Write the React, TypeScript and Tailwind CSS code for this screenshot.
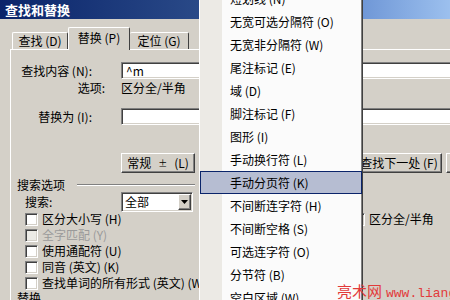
const sunken =
  "bg-white border border-t-[#808080] border-l-[#808080] border-r-white border-b-white shadow-[inset_1px_1px_0_#404040,inset_-1px_-1px_0_#d4d0c8]";
const raised =
  "bg-[#d4d0c8] border border-t-white border-l-white border-r-[#404040] border-b-[#404040] shadow-[inset_-1px_-1px_0_#808080]";

const menuItems = [
  "短划线 (N)",
  "无宽可选分隔符 (O)",
  "无宽非分隔符 (W)",
  "尾注标记 (E)",
  "域 (D)",
  "脚注标记 (F)",
  "图形 (I)",
  "手动换行符 (L)",
  "手动分页符 (K)",
  "不间断连字符 (H)",
  "不间断空格 (S)",
  "可选连字符 (O)",
  "分节符 (B)",
  "空白区域 (W)",
];

function Check({ checked, disabled }: { checked?: boolean; disabled?: boolean }) {
  return (
    <div
      className={`w-[13px] h-[13px] shrink-0 flex items-center justify-center border border-t-[#808080] border-l-[#808080] border-r-white border-b-white shadow-[inset_1px_1px_0_#404040,inset_-1px_-1px_0_#d4d0c8] ${
        disabled ? "bg-[#ecebe6]" : "bg-white"
      }`}
    >
      {checked && (
        <svg width="9" height="9" viewBox="0 0 9 9">
          <path d="M1 4 L3 6.5 L8 1.5" stroke="#000" strokeWidth="1.8" fill="none" />
        </svg>
      )}
    </div>
  );
}

function CheckRow({ label, disabled }: { label: string; disabled?: boolean }) {
  return (
    <div className="h-[16px] flex items-center pl-[14px] gap-[4px] shrink-0">
      <Check disabled={disabled} />
      <span className={disabled ? "text-[#9a9a9a]" : ""}>{label}</span>
    </div>
  );
}

export default function App() {
  return (
    <div className="relative w-[450px] h-[300px] overflow-hidden whitespace-nowrap bg-[#d4d0c8] text-[12px] leading-none text-black font-['Noto_Sans_CJK_SC',sans-serif]">
      {/* title bar */}
      <div className="h-[19px] flex items-center pl-[5px] bg-[linear-gradient(90deg,#0a246a_0%,#2a4a88_45%,#6e96d6_80%,#9cc0ee_100%)]">
        <span className="text-white font-bold text-[13px]">查找和替换</span>
      </div>

      {/* tabs */}
      <div className="flex items-end pl-[12px] mt-[8px] h-[22px]">
        <div className="w-[56px] h-[17px] flex items-center justify-center border-t border-l border-white border-r border-r-[#404040] rounded-t-[2px]">
          查找 (D)
        </div>
        <div className="relative z-10 w-[62px] h-[23px] -mb-px bg-[#d4d0c8] flex items-center justify-center border-t border-l border-white border-r border-r-[#404040] rounded-t-[2px] pb-[3px]">
          替换 (P)
        </div>
        <div className="w-[59px] h-[17px] flex items-center justify-center border-t border-white border-r border-r-[#404040] rounded-t-[2px]">
          定位 (G)
        </div>
      </div>

      {/* tab panel */}
      <div className="ml-[10px] border-t border-l border-white h-[260px] flex flex-col">
        <div className="mt-[12px] h-[17px] flex items-center shrink-0">
          <span className="w-[81px] shrink-0 text-right">查找内容 (N):</span>
          <div className={`ml-[29px] w-[400px] shrink-0 h-[17px] flex items-center pl-[4px] ${sunken}`}>^m</div>
        </div>
        <div className="h-[18px] flex items-center shrink-0">
          <span className="w-[94px] shrink-0 text-right">选项:</span>
          <span className="ml-[16px]">区分全/半角</span>
        </div>
        <div className="mt-[11px] h-[17px] flex items-center shrink-0">
          <span className="w-[81px] shrink-0 text-right">替换为 (I):</span>
          <div className={`ml-[29px] w-[400px] shrink-0 h-[17px] ${sunken}`} />
        </div>

        <div className="mt-[28px] h-[20px] flex shrink-0">
          <div className={`ml-[110px] w-[74px] shrink-0 h-[20px] flex items-center justify-center ${raised}`}>
            常规<span className="text-[9px] mx-[7px]">±</span>(L)
          </div>
          <div className={`ml-[161px] w-[86px] shrink-0 h-[20px] flex items-center justify-center ${raised}`}>
            查找下一处 (F)
          </div>
          <div className={`ml-[4px] w-[75px] shrink-0 h-[20px] ${raised}`} />
        </div>

        <div className="mt-[5px] h-[14px] flex items-center shrink-0">
          <span className="ml-[6px]">搜索选项</span>
          <div className="ml-[12px] w-[118px] h-[2px] border-t border-t-[#808080] border-b border-b-white" />
        </div>

        <div className="h-[19px] flex items-start shrink-0">
          <span className="ml-[14px] mt-[4px] w-[40px] shrink-0">搜索:</span>
          <div className={`ml-[56px] w-[72px] shrink-0 h-[20px] flex items-center justify-between pl-[3px] pr-[1px] ${sunken}`}>
            <span>全部</span>
            <div className={`w-[13px] h-[16px] flex items-center justify-center ${raised}`}>
              <svg width="7" height="4" viewBox="0 0 7 4">
                <path d="M0 0 H7 L3.5 4 Z" fill="#000" />
              </svg>
            </div>
          </div>
        </div>

        <div className="h-[16px] flex items-center shrink-0">
          <div className="w-[341px] shrink-0 flex items-center pl-[14px] gap-[4px]">
            <Check />
            <span>区分大小写 (H)</span>
          </div>
          <div className="flex items-center gap-[4px]">
            <Check checked />
            <span>区分全/半角</span>
          </div>
        </div>
        <CheckRow label="全字匹配 (Y)" disabled />
        <CheckRow label="使用通配符 (U)" />
        <CheckRow label="同音 (英文) (K)" />
        <CheckRow label="查找单词的所有形式 (英文) (W)" />
        <div className="h-[14px] flex items-center pl-[6px] shrink-0">替换</div>
      </div>

      {/* special characters menu */}
      <div className="absolute left-[199px] top-[-13px] w-[164px] h-[330px] flex flex-col border-l border-l-white border-r border-r-[#404040] shadow-[inset_-1px_0_0_#808080] bg-[linear-gradient(90deg,#eceae5_0,#eceae5_22px,#fbfbfb_22px)]">
        {menuItems.map((t, i) =>
          i === 8 ? (
            <div
              key={i}
              className="h-[23px] shrink-0 flex items-center pl-[29px] border border-[#0a246a] bg-[#b6bdd2]"
            >
              {t}
            </div>
          ) : (
            <div key={i} className="h-[23px] shrink-0 flex items-center pl-[30px]">
              {t}
            </div>
          )
        )}
      </div>

      {/* watermark */}
      <div className="absolute left-[337px] top-[283px] flex items-baseline text-[#e23a3a]">
        <span className="text-[15px]">亮术网</span>
        <span className="ml-[4px] text-[13px] font-['Liberation_Mono',monospace]">www.liang</span>
      </div>
    </div>
  );
}
